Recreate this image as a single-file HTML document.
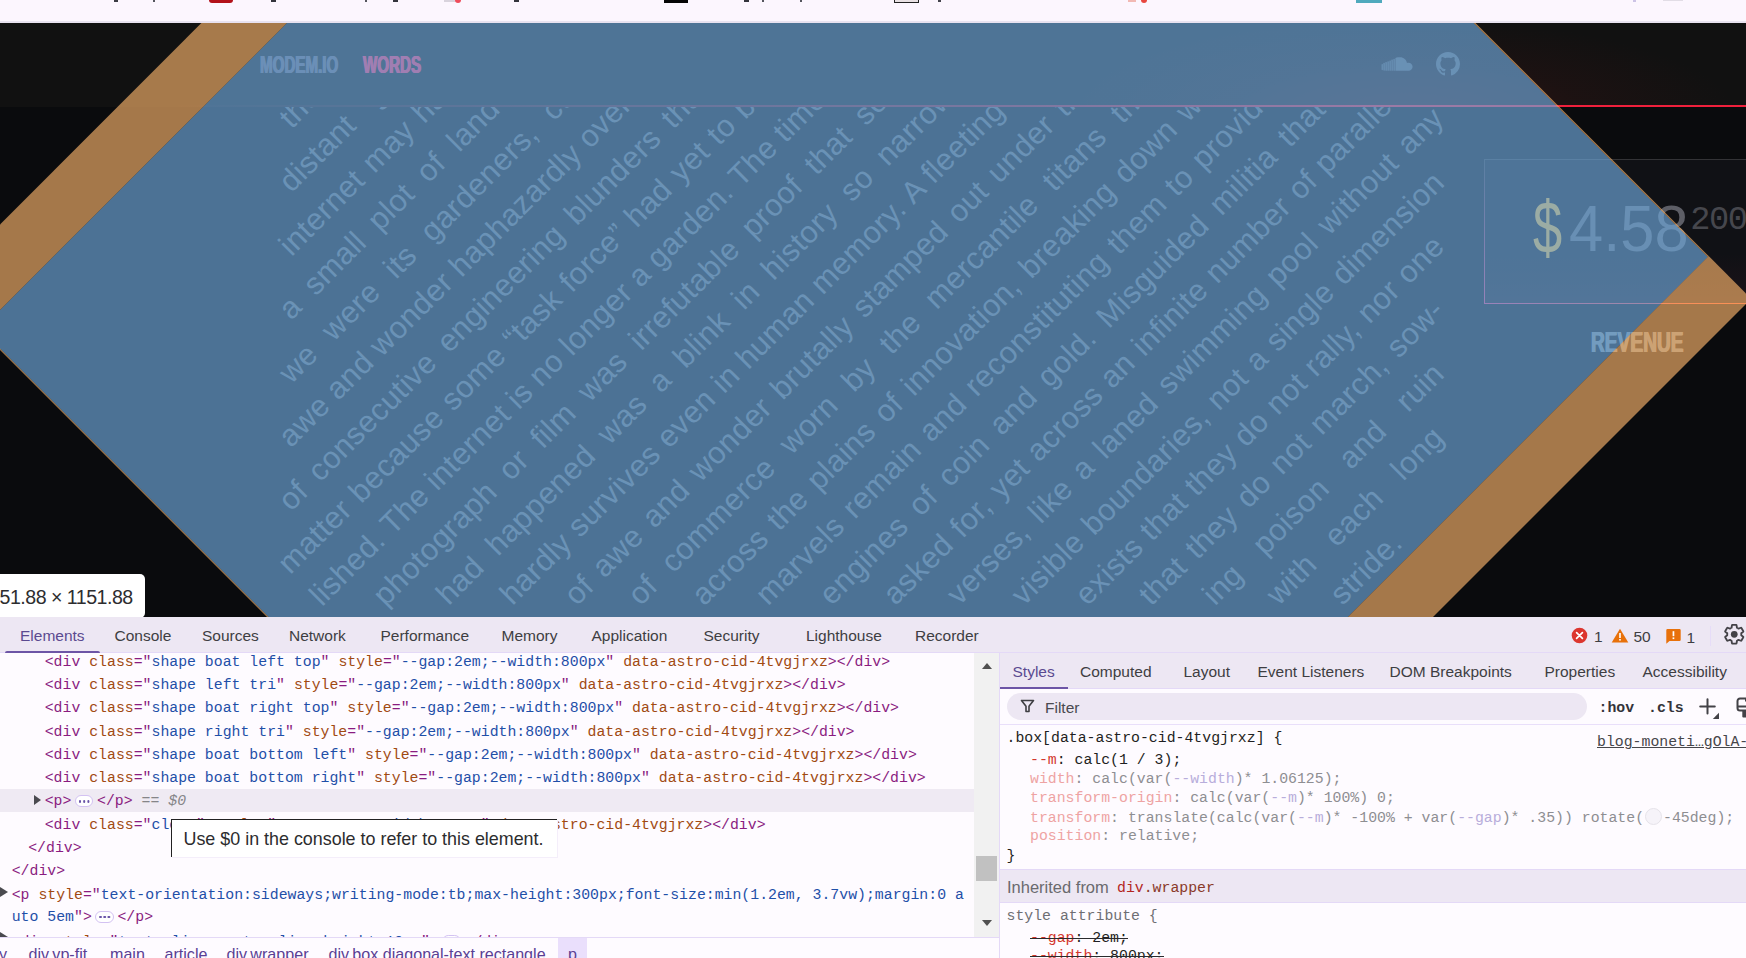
<!DOCTYPE html>
<html lang="en">
<head>
<meta charset="utf-8">
<title>modem.io — words</title>
<style>
*{box-sizing:border-box}
html,body{margin:0;padding:0;width:1746px;height:958px;overflow:hidden;background:#fdf6fe;font-family:"Liberation Sans",sans-serif}
#chrome{position:absolute;left:0;top:0;width:1746px;height:23px;background:#fcf6fe;overflow:hidden;border-bottom:2px solid #e8e2f0;z-index:5}
#chrome i{position:absolute;top:0;display:block}
#page{position:absolute;left:0;top:22px;width:1746px;height:595px;overflow:hidden;background:#0a0b0d}
/* rotated text */
#rot{position:absolute;left:0;top:-22px;width:0;height:0;transform-origin:0 0;transform:rotate(-45deg)}
.ln{position:absolute;height:45.15px;line-height:45.15px;font-size:30.7px;letter-spacing:.5px;color:#62676d;white-space:nowrap;overflow:visible}
.ln.j{white-space:normal;text-align:justify;text-align-last:justify}
/* header */
#hdr{position:absolute;left:0;top:0;width:1746px;height:85px;background:#111111}
#hdr .glow{position:absolute;right:0;top:0;width:900px;height:84px;background:radial-gradient(ellipse 330px 95px at 560px 92px,rgba(70,22,22,.6),rgba(60,20,20,.25) 55%,rgba(40,18,18,0) 100%)}
#hdrline{position:absolute;left:0;top:83.2px;width:1746px;height:2px;background:linear-gradient(to right,rgba(240,32,64,0) 10%,rgba(240,32,64,.55) 55%,#f0203c 80%)}
.nav{position:absolute;top:27.9px;height:30px;line-height:30px;font-weight:bold;font-size:23.7px;white-space:nowrap;transform-origin:0 50%}
#n1{left:260px;color:#635f70;transform:scaleX(.64);text-shadow:.85px 0 0 #635f70,-.85px 0 0 #635f70}
#n2{left:363px;color:#ff2d62;transform:scaleX(.64);text-shadow:.85px 0 0 #ff2d62,-.85px 0 0 #ff2d62}
#ico1{position:absolute;left:1381px;top:34px}
#ico2{position:absolute;left:1436px;top:30px}
/* card */
#card{position:absolute;left:1484px;top:137px;width:300px;height:144px;background:linear-gradient(to top,rgba(255,40,90,.05),rgba(255,40,90,0) 35%),#101115;border:1px solid #333336;border-bottom:0}
#card .bl{position:absolute;left:-1px;top:0;width:1px;height:143px;background:linear-gradient(to bottom,#333336,#e83a78)}
#card .bb{position:absolute;left:-1px;bottom:-1.4px;width:302px;height:1.9px;background:linear-gradient(to right,#e83a78,#ff5030 80%)}
#dol{position:absolute;left:1532.8px;top:169.1px;font-size:73.3px;line-height:74px;color:#f0b43a;transform-origin:0 50%;transform:scaleX(.715)}
#amt{position:absolute;left:1568.7px;top:169.6px;font-size:64px;line-height:74px;color:#5d5e66;transform-origin:0 50%;transform:scaleX(.96);white-space:nowrap}
#sm{position:absolute;left:1690.3px;top:180.7px;font-size:33.7px;line-height:34px;color:#46474d;white-space:nowrap;font-family:"Liberation Mono",monospace;letter-spacing:-1.5px}
#rev{position:absolute;left:1590.5px;top:303.2px;font-weight:bold;font-size:29.7px;line-height:34px;color:#7d8588;transform-origin:0 50%;transform:scaleX(.645);white-space:nowrap;text-shadow:.8px 0 0 #7d8588,-.8px 0 0 #7d8588}
#ov{position:absolute;left:0;top:-22px}
#tip{position:absolute;left:-10px;top:551.7px;width:155.2px;height:44px;background:#fff;border-radius:5px;color:#2d2d2f;font-size:19.6px;letter-spacing:-.5px;line-height:47.6px;white-space:nowrap;padding-left:9.5px}
/* devtools */
#dt{position:absolute;left:0;top:617px;width:1746px;height:341px;background:#fefbff;overflow:hidden}
</style>
</head>
<body>
<div id="chrome">
<i style="left:114px;width:4px;height:2px;background:#3b3b44"></i>
<i style="left:153px;width:2px;height:2px;background:#55555e"></i>
<i style="left:209px;width:24px;height:3px;background:#b3121a;border-radius:0 0 4px 4px"></i>
<i style="left:271px;width:5px;height:2px;background:#33333c"></i>
<i style="left:365px;width:2px;height:2px;background:#55555e"></i>
<i style="left:393px;width:5px;height:2px;background:#33333c"></i>
<i style="left:444px;width:12px;height:2px;background:#d9d3dd"></i>
<i style="left:455px;width:6px;height:3px;background:#ef4b5b;border-radius:0 0 3px 3px"></i>
<i style="left:514px;width:5px;height:2px;background:#33333c"></i>
<i style="left:664px;width:24px;height:3px;background:#050505"></i>
<i style="left:744px;width:5px;height:2px;background:#33333c"></i>
<i style="left:762px;width:2px;height:2px;background:#55555e"></i>
<i style="left:800px;width:2px;height:2px;background:#55555e"></i>
<i style="left:894px;width:25px;height:3px;border:1px solid #222;border-top:0;background:#e9e1e4"></i>
<i style="left:938px;width:3px;height:2px;background:#44444c"></i>
<i style="left:1128px;width:8px;height:2px;background:#f2b9b4"></i>
<i style="left:1141px;width:6px;height:3px;background:#e8473f;border-radius:0 0 3px 3px"></i>
<i style="left:1356px;width:26px;height:3px;background:#4fa9bd"></i>
<i style="left:1633px;width:3px;height:2px;background:#cdc3e6"></i>
<i style="left:1663px;width:20px;height:1px;background:#e2dde6"></i>
</div>

<div id="page">
<div id="rot">
<div class="ln" style="left:114.5px;top:264.7px;width:90.7px;">the</div>
<div class="ln" style="left:69.3px;top:309.8px;width:181.0px;word-spacing:10px;">distant ‘garden</div>
<div class="ln" style="left:24.2px;top:355.0px;width:271.3px;word-spacing:2.0px;">internet may have</div>
<div class="ln" style="left:-21.0px;top:400.1px;width:361.6px;word-spacing:7.9px;">a small plot of land</div>
<div class="ln" style="left:-66.1px;top:445.3px;width:451.9px;word-spacing:10.7px;">we were its gardeners, cultivating</div>
<div class="ln" style="left:-111.3px;top:490.4px;width:542.2px;word-spacing:-0.1px;">awe and wonder haphazardly over</div>
<div class="ln" style="left:-156.4px;top:534.6px;width:632.5px;word-spacing:5.7px;">of consecutive engineering blunders that</div>
<div class="ln" style="left:-201.6px;top:579.2px;width:722.8px;word-spacing:1.6px;">matter because some “task force” had yet to be</div>
<div class="ln" style="left:-201.8px;top:623.9px;width:768.2px;word-spacing:-0.4px;">lished. The internet is no longer a garden. The time</div>
<div class="ln" style="left:-156.7px;top:668.5px;width:768.2px;word-spacing:7.75px;">photograph or film was irrefutable proof that something</div>
<div class="ln" style="left:-111.5px;top:713.2px;width:768.2px;word-spacing:8.0px;">had happened was a blink in history so narrow</div>
<div class="ln" style="left:-66.4px;top:758.3px;width:768.2px;word-spacing:0.2px;">hardly survives even in human memory. A fleeting</div>
<div class="ln" style="left:-21.2px;top:803.5px;width:768.2px;word-spacing:3.6px;">of awe and wonder brutally stamped out under the</div>
<div class="ln" style="left:23.9px;top:848.6px;width:768.2px;word-spacing:10.8px;">of commerce worn by the mercantile titans that</div>
<div class="ln" style="left:69.1px;top:893.8px;width:768.2px;word-spacing:3.2px;">across the plains of innovation, breaking down what</div>
<div class="ln" style="left:114.2px;top:939.0px;width:768.2px;word-spacing:2.55px;">marvels remain and reconstituting them to provide</div>
<div class="ln" style="left:159.4px;top:984.1px;width:768.2px;word-spacing:5.8px;">engines of coin and gold. Misguided militia that</div>
<div class="ln" style="left:204.5px;top:1029.2px;width:768.2px;word-spacing:1.35px;">asked for, yet across an infinite number of parallel</div>
<div class="ln" style="left:249.7px;top:1074.4px;width:687.8px;word-spacing:3.82px;">verses, like a laned swimming pool without any</div>
<div class="ln" style="left:294.8px;top:1119.5px;width:597.5px;word-spacing:1.66px;">visible boundaries, not a single dimension</div>
<div class="ln" style="left:340.0px;top:1164.7px;width:507.2px;word-spacing:0.84px;">exists that they do not rally, nor one</div>
<div class="ln" style="left:385.1px;top:1209.8px;width:416.9px;word-spacing:3.12px;">that they do not march, sow-</div>
<div class="ln" style="left:430.3px;top:1255.0px;width:326.6px;word-spacing:19.23px;">ing poison and ruin</div>
<div class="ln" style="left:475.4px;top:1300.2px;width:236.3px;word-spacing:16.52px;">with each long</div>
<div class="ln" style="left:520.6px;top:1345.3px;width:146.0px;">stride.</div>
</div>

<div id="card"><div class="bl"></div><div class="bb"></div></div>
<div id="dol">$</div>
<div id="amt">4.58</div>
<div id="sm">200</div>
<div id="rev">REVENUE</div>

<div id="hdr"><div class="glow"></div>
<div class="nav" id="n1">MODEM.IO</div>
<div class="nav" id="n2">WORDS</div>
<svg id="ico1" width="32" height="16" viewBox="0 0 32 16"><g fill="#5f636b"><path d="M17 1.2c-1 0-1.9.3-2.6.7v12.9h13.1c2.300 0 4.100-1.800 4.100-4.000s-1.800-4.000-4.100-4.000c-.5 0-1 .1-1.500.3C25.500 3.800 22.600 1.200 19.100 1.200z" transform="translate(0,0)"/><g opacity=".8"><rect x="12.300" y="2.800" width="1.700" height="12" rx=".6"/><rect x="10.300" y="3.600" width="1.700" height="11.200" rx=".6"/><rect x="8.300" y="4.500" width="1.700" height="10.300" rx=".6"/><rect x="6.300" y="5.300" width="1.700" height="9.500" rx=".6"/><rect x="4.300" y="6" width="1.700" height="8.800" rx=".6"/><rect x="2.300" y="6.800" width="1.700" height="8" rx=".8"/><rect x=".5" y="8" width="1.600" height="6.300" rx=".8"/></g></g></svg>
<svg id="ico2" width="24" height="24" viewBox="0 0 16 16"><path fill="#5f636b" d="M8 0C3.580 0 0 3.580 0 8c0 3.540 2.290 6.530 5.470 7.590.4.070.55-.17.55-.38 0-.19-.010-.82-.010-1.490-2.010.37-2.530-.49-2.690-.94-.09-.23-.48-.94-.82-1.130-.28-.15-.68-.52-.010-.53.63-.010 1.080.58 1.230.82.72 1.210 1.870.87 2.330.66.070-.52.28-.87.51-1.070-1.780-.2-3.640-.89-3.640-3.950 0-.87.31-1.590.82-2.150-.08-.2-.36-1.020.08-2.120 0 0 .67-.21 2.200.82.64-.18 1.320-.27 2-.27.68 0 1.360.09 2 .27 1.530-1.040 2.200-.82 2.200-.82.44 1.100.16 1.920.08 2.120.51.56.82 1.270.82 2.150 0 3.070-1.870 3.750-3.650 3.950.29.25.54.73.54 1.480 0 1.070-.010 1.930-.010 2.200 0 .21.15.46.55.38A8.013 8.013 0 0016 8c0-4.420-3.580-8-8-8z"/></svg>
</div>
<div id="hdrline"></div>

<svg id="ov" width="1746" height="639" viewBox="0 0 1746 639">
<polygon fill="rgba(111,168,220,.66)" points="287.9,22.0 1472.7,22.0 1707.8,257.0 1347.8,617.0 268.5,617.0 0.0,348.5 0.0,309.9"/>
<g fill="rgba(246,178,107,.66)">
<polygon points="202.4,22.0 287.9,22.0 0.0,309.9 0.0,224.4"/>
<polygon points="1347.8,617.0 1708.7,256.1 1746.0,293.5 1746.0,304.0 1433.0,617.0"/>
<polygon points="1472.7,22.0 1474.5,22.0 1708.7,256.1 1707.8,257.0"/>
<polygon points="0.0,348.5 0.0,350.0 267.0,617.0 268.5,617.0"/>
</g>
</svg>
<div id="tip">51.88 × 1151.88</div>
</div>

<div id="dt">
<style>
#dt{font-size:15.5px;color:#3b3b3f}
#dt .abs{position:absolute;white-space:nowrap}
#tb1{position:absolute;left:0;top:0;width:1746px;height:35.500px;background:#ede7f3;border-bottom:1px solid #e4d9f7}
.tab{position:absolute;top:7.7px;height:22px;line-height:22px;white-space:nowrap;color:#3e3e42}
#tb1 .sel,#tb2 .sel{color:#5b4a90}
#ul1{position:absolute;left:5px;top:33.6px;width:95px;height:2px;background:#6d55a6;border-radius:2px 2px 0 0}
#el{position:absolute;left:0;top:36px;width:974px;height:284px;background:#fefbff;overflow:hidden}
.r{position:absolute;left:0;box-sizing:border-box;height:23.280px;line-height:23.280px;white-space:pre;font-family:"Liberation Mono",monospace;font-size:14.830px;width:974px}
.t{color:#8a1b80}.n{color:#a14a12}.v{color:#1f4fa8}.g{color:#858588}
.r.hl{background:#efeaf3;margin-top:-1.2px;padding-top:1.2px}
.dots{display:inline-block;width:18.5px;height:12.6px;border:1px solid #d3c2f2;border-radius:6.3px;background:#fff;vertical-align:-1.5px;position:relative;margin:0 3.6px;font-size:0}
.dots:before{content:"";position:absolute;left:2.9px;top:4.1px;width:2.6px;height:2.6px;border-radius:50%;background:#6a55a8;box-shadow:4.2px 0 0 #6a55a8,8.4px 0 0 #6a55a8}
.tri{position:absolute;width:0;height:0;border-left:7.500px solid #4a4a4f;border-top:5px solid transparent;border-bottom:5px solid transparent}
.tri.big{border-left-width:8.2px;border-top-width:5.2px;border-bottom-width:5.2px}
#sb{position:absolute;left:974px;top:36px;width:25px;height:284px;background:#f1f1f1}
#sb .th{position:absolute;left:2px;top:203px;width:21px;height:24.500px;background:#c1c1c1}
#sb .up{position:absolute;left:7.500px;top:9.500px;width:0;height:0;border-left:5px solid transparent;border-right:5px solid transparent;border-bottom:6px solid #505050}
#sb .dn{position:absolute;left:7.500px;top:267px;width:0;height:0;border-left:5px solid transparent;border-right:5px solid transparent;border-top:6px solid #505050}
#vdiv{position:absolute;left:999px;top:36px;width:1px;height:305px;background:#e4d9f7}
#bc{position:absolute;left:0;top:320px;width:999px;height:21px;background:#fefbff;border-top:1px solid #e4d9f7;color:#5a3f94}
#bc span{position:absolute;top:5px;line-height:22px;white-space:nowrap;font-size:16.1px}
#bc .p{left:558px;top:0;width:29px;height:21px;background:#eadffc}
#tt{position:absolute;left:171px;top:202.3px;width:386px;height:37.3px;background:#fff;border-top:1px solid #222;border-left:1px solid #222;color:#2c2c2e;font-size:17.9px;line-height:39px;padding-left:11.5px;white-space:nowrap;box-shadow:1px 1px 0 #f4eefa}
#rp{position:absolute;left:1000px;top:36px;width:746px;height:305px;background:#fefbff;overflow:hidden}
#tb2{position:absolute;left:0;top:0;width:746px;height:35.500px;background:#ede7f3;border-bottom:1px solid #e4d9f7}
#ul2{position:absolute;left:0;top:33.500px;width:68px;height:2.500px;background:#6d55a6}
#flt{position:absolute;left:6.500px;top:40px;width:580px;height:27px;border-radius:14px;background:#ede7f3}
#fl2{position:absolute;left:0;top:71px;width:746px;height:1px;background:#e9dffa}
.m{position:absolute;white-space:pre;font-family:"Liberation Mono",monospace;font-size:14.830px;line-height:19px;height:19px}
.pn{color:#d2372d}.dk{color:#1f1f22}.fp{color:#eea3a3}.fv{color:#8e8e92}.fx{color:#b8addb}
#inh{position:absolute;left:0;top:215.500px;width:746px;height:34.500px;background:#ede7f3;border-top:1px solid #e4d9f7;border-bottom:1px solid #e4d9f7}
.stk{position:absolute;height:1.300px;background:#2a2a2d}
</style>
<div id="tb1">
<div class="tab sel" style="left:20px">Elements</div>
<div class="tab" style="left:114.500px">Console</div>
<div class="tab" style="left:202px">Sources</div>
<div class="tab" style="left:289px">Network</div>
<div class="tab" style="left:380.500px">Performance</div>
<div class="tab" style="left:501.500px">Memory</div>
<div class="tab" style="left:591.500px">Application</div>
<div class="tab" style="left:703.500px">Security</div>
<div class="tab" style="left:806px">Lighthouse</div>
<div class="tab" style="left:915px">Recorder</div>
<div id="ul1"></div>
<svg class="abs" style="left:1571px;top:10px" width="17" height="17" viewBox="0 0 17 17"><circle cx="8.500" cy="8.500" r="7.800" fill="#dc362e"/><path d="M5.600 5.600l5.800 5.800M11.400 5.600l-5.800 5.800" stroke="#fff" stroke-width="1.700" stroke-linecap="round"/></svg>
<div class="tab" style="left:1594px;top:8.500px">1</div>
<svg class="abs" style="left:1610.500px;top:10.500px" width="18" height="15" viewBox="0 0 18 15"><path d="M9 .8L17.300 14.400H.7z" fill="#e8710a"/><rect x="8.200" y="5" width="1.600" height="5" fill="#fff"/><rect x="8.200" y="11" width="1.600" height="1.600" fill="#fff"/></svg>
<div class="tab" style="left:1633.500px;top:8.500px">50</div>
<svg class="abs" style="left:1666px;top:11.500px" width="15" height="15" viewBox="0 0 15 15"><path d="M1.500 0h12a1.200 1.200 0 011.200 1.200v9.600a1.200 1.200 0 01-1.200 1.200H3.500L.3 14.800V1.200A1.200 1.200 0 011.500 0z" fill="#e8710a"/><rect x="6.600" y="2.200" width="1.700" height="5" fill="#fff"/><rect x="6.600" y="8.400" width="1.700" height="1.700" fill="#fff"/></svg>
<div class="tab" style="left:1686.500px;top:9.500px">1</div>
<div class="abs" style="left:1709.500px;top:9px;width:1.500px;height:20px;background:#e6dcf8"></div>
<svg class="abs" style="left:1723.2px;top:6.1px" width="22.5" height="22.5" viewBox="0 0 24 24"><path fill="none" stroke="#434247" stroke-width="1.95" stroke-linejoin="round" d="M19.43 12.98c.04-.32.07-.64.07-.98s-.03-.66-.07-.98l2.110-1.650a.5.5 0 00.12-.64l-2-3.460a.5.5 0 00-.61-.22l-2.490 1a7.300 7.300 0 00-1.690-.98l-.38-2.650A.49.49 0 0014 2h-4a.49.49 0 00-.49.42l-.38 2.650c-.61.25-1.170.59-1.690.98l-2.490-1a.49.49 0 00-.61.22l-2 3.460a.49.49 0 00.12.64l2.110 1.650c-.04.32-.07.65-.07.98s.03.66.07.98l-2.110 1.650a.5.5 0 00-.12.64l2 3.460c.12.22.39.3.61.22l2.490-1c.52.4 1.080.73 1.690.98l.38 2.650c.03.24.24.42.49.42h4c.25 0 .46-.18.49-.42l.38-2.650c.61-.25 1.170-.59 1.690-.98l2.490 1c.23.09.49 0 .61-.22l2-3.460a.5.5 0 00-.12-.64z"/><circle cx="12" cy="12" r="3.600" fill="#434247"/></svg>
</div>

<div id="el">
<div class="r" style="top:-2.30px;padding-left:44.7px"><span class="t">&lt;div</span> <span class="n">class</span><span class="t">="</span><span class="v">shape boat left top</span><span class="t">"</span> <span class="n">style</span><span class="t">="</span><span class="v">--gap:2em;--width:800px</span><span class="t">"</span> <span class="n">data-astro-cid-4tvgjrxz</span><span class="t">&gt;&lt;/div&gt;</span></div>
<div class="r" style="top:20.98px;padding-left:44.7px"><span class="t">&lt;div</span> <span class="n">class</span><span class="t">="</span><span class="v">shape left tri</span><span class="t">"</span> <span class="n">style</span><span class="t">="</span><span class="v">--gap:2em;--width:800px</span><span class="t">"</span> <span class="n">data-astro-cid-4tvgjrxz</span><span class="t">&gt;&lt;/div&gt;</span></div>
<div class="r" style="top:44.26px;padding-left:44.7px"><span class="t">&lt;div</span> <span class="n">class</span><span class="t">="</span><span class="v">shape boat right top</span><span class="t">"</span> <span class="n">style</span><span class="t">="</span><span class="v">--gap:2em;--width:800px</span><span class="t">"</span> <span class="n">data-astro-cid-4tvgjrxz</span><span class="t">&gt;&lt;/div&gt;</span></div>
<div class="r" style="top:67.54px;padding-left:44.7px"><span class="t">&lt;div</span> <span class="n">class</span><span class="t">="</span><span class="v">shape right tri</span><span class="t">"</span> <span class="n">style</span><span class="t">="</span><span class="v">--gap:2em;--width:800px</span><span class="t">"</span> <span class="n">data-astro-cid-4tvgjrxz</span><span class="t">&gt;&lt;/div&gt;</span></div>
<div class="r" style="top:90.82px;padding-left:44.7px"><span class="t">&lt;div</span> <span class="n">class</span><span class="t">="</span><span class="v">shape boat bottom left</span><span class="t">"</span> <span class="n">style</span><span class="t">="</span><span class="v">--gap:2em;--width:800px</span><span class="t">"</span> <span class="n">data-astro-cid-4tvgjrxz</span><span class="t">&gt;&lt;/div&gt;</span></div>
<div class="r" style="top:114.10px;padding-left:44.7px"><span class="t">&lt;div</span> <span class="n">class</span><span class="t">="</span><span class="v">shape boat bottom right</span><span class="t">"</span> <span class="n">style</span><span class="t">="</span><span class="v">--gap:2em;--width:800px</span><span class="t">"</span> <span class="n">data-astro-cid-4tvgjrxz</span><span class="t">&gt;&lt;/div&gt;</span></div>
<div class="r hl" style="top:137.38px;padding-left:44.7px"><span class="t">&lt;p&gt;</span><span class="dots">…</span><span class="t">&lt;/p&gt;</span><span class="g"> == <i>$0</i></span></div>
<div class="tri" style="left:33.8px;top:141.6px"></div>
<div class="r" style="top:160.66px;padding-left:44.7px"><span class="t">&lt;div</span> <span class="n">class</span><span class="t">="</span><span class="v">clear</span><span class="t">"</span> <span class="n">style</span><span class="t">="</span><span class="v">--gap:2em;--width:800px</span><span class="t">"</span> <span class="n">data-astro-cid-4tvgjrxz</span><span class="t">&gt;&lt;/div&gt;</span></div>
<div class="r" style="top:183.94px;padding-left:28.2px"><span class="t">&lt;/div&gt;</span></div>
<div class="r" style="top:207.22px;padding-left:11.7px"><span class="t">&lt;/div&gt;</span></div>
<div class="tri big" style="left:0;top:233.6px"></div>
<div class="r" style="top:230.50px;padding-left:11.7px"><span class="t">&lt;p</span> <span class="n">style</span><span class="t">="</span><span class="v">text-orientation:sideways;writing-mode:tb;max-height:300px;font-size:min(1.2em, 3.7vw);margin:0 a</span></div>
<div class="r" style="top:253.10px;padding-left:11.7px"><span class="v">uto 5em</span><span class="t">"&gt;</span><span class="dots">…</span><span class="t">&lt;/p&gt;</span></div>
<div class="tri big" style="left:0;top:279.3px"></div>
<div class="r" style="top:277.8px;padding-left:11.7px"><span class="t">&lt;div</span> <span class="n">style</span><span class="t">="</span><span class="v">text-align:center;line-height:10em</span><span class="t">"&gt;</span><span class="dots">…</span><span class="t">&lt;/div&gt;</span></div>
</div>
<div id="sb"><div class="up"></div><div class="th"></div><div class="dn"></div></div>
<div id="tt">Use $0 in the console to refer to this element.</div>
<div id="bc">
<span style="left:-1px">y</span><span style="left:28.500px">div.vp-fit</span><span style="left:110px">main</span><span style="left:164.500px">article</span><span style="left:226.500px">div.wrapper</span><span style="left:328.500px">div.box.diagonal-text.rectangle</span><span class="p"></span><span style="left:568px">p</span>
</div>
<div id="vdiv"></div>

<div id="rp">
<div id="tb2">
<div class="tab sel" style="left:12.500px;top:8px">Styles</div>
<div class="tab" style="left:80px;top:8px">Computed</div>
<div class="tab" style="left:183.500px;top:8px">Layout</div>
<div class="tab" style="left:257.500px;top:8px">Event Listeners</div>
<div class="tab" style="left:389.500px;top:8px">DOM Breakpoints</div>
<div class="tab" style="left:544.500px;top:8px">Properties</div>
<div class="tab" style="left:642.500px;top:8px">Accessibility</div>
<div id="ul2"></div>
</div>
<div id="flt"></div>
<svg class="abs" style="left:20px;top:46px" width="15" height="15" viewBox="0 0 15 15"><path d="M1.500 1.500h12L9 7.300v5.200H6V7.300z" fill="none" stroke="#3e3e42" stroke-width="1.600" stroke-linejoin="round"/></svg>
<div class="abs" style="left:45px;top:44px;line-height:22px;color:#4a4a50">Filter</div>
<div class="m" style="left:598.500px;top:46px;font-weight:bold;color:#34343a">:hov</div>
<div class="m" style="left:648px;top:46px;font-weight:bold;color:#34343a">.cls</div>
<svg class="abs" style="left:698px;top:43px" width="24" height="24" viewBox="0 0 24 24"><path d="M9.500 3.200v14.400M2.200 10.400h14.600" stroke="#434247" stroke-width="2" stroke-linecap="round" fill="none"/><path d="M21 16.800v6.200h-6.200z" fill="#434247"/></svg>
<svg class="abs" style="left:736px;top:43.5px" width="12" height="24" viewBox="0 0 12 24"><path d="M4 1.500h10v12H4A2.500 2.500 0 011.500 11V4A2.500 2.500 0 014 1.500zM1.500 9.500h12" fill="none" stroke="#434247" stroke-width="2"/><rect x="6.300" y="13" width="8" height="7.500" rx="1" fill="#434247"/><rect x="9" y="1" width="2" height="3.500" fill="#434247"/></svg>
<div id="fl2"></div>
<div class="m dk" style="left:6.500px;top:75.500px">.box[data-astro-cid-4tvgjrxz] {</div>
<div class="m" style="left:597px;top:80px;color:#46464a;text-decoration:underline">blog-moneti…gOlA-XA.css</div>
<div class="m" style="left:30px;top:97.500px"><span class="pn">--m</span><span class="dk">: calc(1 / 3);</span></div>
<div class="m" style="left:30px;top:116.500px"><span class="fp">width</span><span class="fv">: calc(var(</span><span class="fx">--width</span><span class="fv">)* 1.06125);</span></div>
<div class="m" style="left:30px;top:135.500px"><span class="fp">transform-origin</span><span class="fv">: calc(var(</span><span class="fx">--m</span><span class="fv">)* 100%) 0;</span></div>
<div class="m" style="left:30px;top:154.500px"><span class="fp">transform</span><span class="fv">: translate(calc(var(</span><span class="fx">--m</span><span class="fv">)* -100% + var(</span><span class="fx">--gap</span><span class="fv">)* .35)) rotate(</span><span style="display:inline-block;width:17px;height:17px;border-radius:50%;border:1px solid #e6e3ea;background:#f6f3f9;vertical-align:-3px;margin:0 1px"></span><span class="fv">-45deg);</span></div>
<div class="m" style="left:30px;top:173.500px"><span class="fp">position</span><span class="fv">: relative;</span></div>
<div class="m dk" style="left:6.500px;top:193.5px">}</div>
<div id="inh"><div class="abs" style="left:7px;top:6px;line-height:22px;color:#6a6a6e;font-size:16.5px">Inherited from</div><div class="m" style="left:117px;top:9.500px;color:#b3261e">div<span style="color:#8a3a2a">.wrapper</span></div></div>
<div class="m" style="left:6.500px;top:253.5px;color:#6e6e73">style attribute {</div>
<div class="m" style="left:30px;top:276px"><span class="pn">--gap</span><span class="dk">: 2em;</span></div>
<div class="stk" style="left:30px;top:284.5px;width:98px"></div>
<div class="m" style="left:30px;top:294.3px"><span class="pn">--width</span><span class="dk">: 800px;</span></div>
<div class="stk" style="left:30px;top:302.8px;width:134px"></div>
</div>

</div>
</body>
</html>
